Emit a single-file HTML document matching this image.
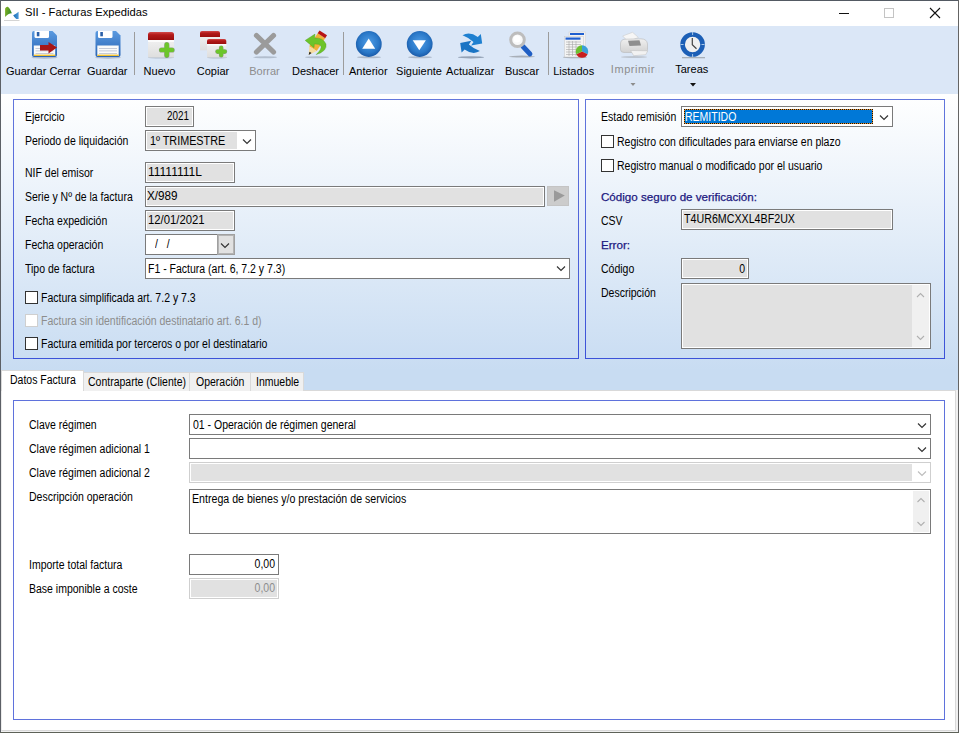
<!DOCTYPE html>
<html><head><meta charset="utf-8">
<style>
*{box-sizing:border-box;margin:0;padding:0}
html,body{width:959px;height:733px;overflow:hidden;background:#fff}
body{position:relative;font-family:"Liberation Sans",sans-serif;color:#000}
.a{position:absolute}
.t{position:absolute;font-size:12px;line-height:13px;white-space:nowrap;transform:scaleX(0.875);transform-origin:0 0}
.r{text-align:right;transform-origin:100% 0}
.tb{position:absolute;font-size:11px;line-height:13px;white-space:nowrap;text-align:center}
.gb{position:absolute;border:1px solid #5f72dc}
.inp{position:absolute;border:1px solid #7a7a7a;background:#e1e1e1;box-shadow:inset 0 0 0 1px #fff}
.wh{position:absolute;border:1px solid #7a7a7a;background:#fff}
.cb{position:absolute;width:13px;height:13px;border:1px solid #333;background:#fff}
.tab{position:absolute;top:372px;height:19px;background:#f0f0f0;border:1px solid #d9d9d9;border-bottom:none}
</style></head><body>
<!-- window frame -->


<!-- title bar -->
<div class="t" style="left:25px;top:6px;font-size:11.2px;transform:none">SII - Facturas Expedidas</div>

<!-- toolbar -->
<div class="a" style="left:1px;top:26px;width:957px;height:68px;background:#dbe7f7"></div>


<svg class="a" style="left:0;top:0" width="959" height="94">
<defs>
<linearGradient id="gBlue" x1="0" y1="0" x2="0" y2="1"><stop offset="0" stop-color="#5a9ae0"/><stop offset="1" stop-color="#2a64b4"/></linearGradient>
<radialGradient id="gCirc" cx="0.5" cy="0.45" r="0.55"><stop offset="0" stop-color="#4f9de6"/><stop offset="0.7" stop-color="#2a78c8"/><stop offset="1" stop-color="#1a5aa8"/></radialGradient>
<linearGradient id="gRed" x1="0" y1="0" x2="0" y2="1"><stop offset="0" stop-color="#d24a4a"/><stop offset="0.35" stop-color="#b31a1a"/><stop offset="1" stop-color="#9a0e0e"/></linearGradient>
<linearGradient id="gCard" x1="0" y1="0" x2="0" y2="1"><stop offset="0" stop-color="#eeeeee"/><stop offset="1" stop-color="#dedede"/></linearGradient>
<linearGradient id="gGreen" x1="0" y1="0" x2="0" y2="1"><stop offset="0" stop-color="#8ad832"/><stop offset="1" stop-color="#52b41c"/></linearGradient>
</defs>
<!-- separators -->
<rect x="134" y="32" width="1" height="43" fill="#9c9c9c"/>
<rect x="343" y="32" width="1" height="43" fill="#9c9c9c"/>
<rect x="548" y="32" width="1" height="43" fill="#9c9c9c"/>
<!-- app icon -->
<linearGradient id="gLeaf" x1="0" y1="0" x2="1" y2="0.3"><stop offset="0" stop-color="#86b41e"/><stop offset="1" stop-color="#338a2e"/></linearGradient>
<linearGradient id="gTri" x1="0" y1="0" x2="1" y2="0"><stop offset="0" stop-color="#1a6cb4"/><stop offset="1" stop-color="#4a98d8"/></linearGradient>
<path d="M5.1 17 L5.1 8.6 Q6 6.6 7.7 6.8 Q9.6 7.4 11.9 13.3 Q8 13.5 5.1 17 Z" fill="url(#gLeaf)"/>
<path d="M13.2 15.3 Q16 14 18.6 11.8 L18.6 19.1 L16.3 18.9 Q14.5 17.8 13.2 15.3 Z" fill="url(#gTri)"/>
<rect x="4" y="20" width="15.5" height="0.9" fill="#d0d0d0"/>
<!-- window buttons -->
<rect x="839" y="13" width="10" height="1" fill="#111"/>
<rect x="884.5" y="8.5" width="9" height="9" fill="none" stroke="#c4c4c4"/>
<path d="M930 8 L940 18 M940 8 L930 18" stroke="#111" stroke-width="1.1"/>

<!-- floppy 1 -->
<g id="flop">
<ellipse cx="44.5" cy="57.5" rx="13" ry="1.2" fill="#8a96a6" opacity="0.55"/>
<path d="M32 33 Q32 31 34 31 L52.5 31 L57 35.5 L57 55 Q57 57 55 57 L34 57 Q32 57 32 55 Z" fill="url(#gBlue)"/>
<path d="M34.5 31 L49 31 L49 36.5 Q49 38 47.5 38 L36 38 Q34.5 38 34.5 36.5 Z" fill="#fff"/>
<rect x="36.8" y="32" width="2.6" height="4.3" fill="#2a5fa8"/>
<rect x="33.8" y="45.5" width="21.4" height="10.5" fill="#fafafa"/>
<rect x="33.8" y="54.6" width="21.4" height="1.4" fill="#f0c030"/>
<rect x="35.5" y="48" width="18" height="0.8" fill="#b8c0d0"/>
<rect x="35.5" y="50.5" width="18" height="0.8" fill="#b8c0d0"/>
<rect x="35.5" y="53" width="18" height="0.8" fill="#b8c0d0"/>
</g>
<polygon points="40,45 48.5,45 48.5,42 57,47.6 48.5,53.4 48.5,50.6 40,50.6" fill="#a81616"/>
<use href="#flop" x="63.5"/>

<!-- nuevo -->
<ellipse cx="161" cy="57.5" rx="13" ry="1" fill="#8a96a6" opacity="0.5"/>
<rect x="148" y="42" width="26" height="15.5" rx="1" fill="url(#gCard)"/>
<rect x="148" y="40" width="26" height="2" fill="#fbfbfb"/>
<path d="M148 40 L148 34.5 Q148 32 150.5 32 L171.5 32 Q174 32 174 34.5 L174 40 Z" fill="url(#gRed)"/>
<path d="M166.8 44.7 V55.3 M161.5 50 H172.10000000000002" stroke="#3f6e22" stroke-width="5.2" stroke-linecap="round" opacity="0.55"/><path d="M166.8 44.7 V55.3 M161.5 50 H172.10000000000002" stroke="#6cc62a" stroke-width="4.2" stroke-linecap="round"/>

<!-- copiar -->
<rect x="200" y="37" width="20" height="13.3" fill="url(#gCard)"/>
<path d="M200 37 L200 33 Q200 31 202 31 L218 31 Q220 31 220 33 L220 37 Z" fill="url(#gRed)"/>
<ellipse cx="217" cy="57.5" rx="10" ry="1" fill="#8a96a6" opacity="0.5"/>
<rect x="207" y="44.5" width="19.3" height="13" fill="url(#gCard)"/>
<rect x="207" y="44" width="19.3" height="1.5" fill="#fbfbfb"/>
<path d="M207 44 L207 41 Q207 39 209 39 L224.3 39 Q226.3 39 226.3 41 L226.3 44 Z" fill="url(#gRed)"/>
<path d="M221.2 47.9 V55.300000000000004 M217.5 51.6 H224.89999999999998" stroke="#3f6e22" stroke-width="4.6" stroke-linecap="round" opacity="0.55"/><path d="M221.2 47.9 V55.300000000000004 M217.5 51.6 H224.89999999999998" stroke="#6cc62a" stroke-width="3.6" stroke-linecap="round"/>

<!-- borrar -->
<ellipse cx="265" cy="57.3" rx="12" ry="1" fill="#8a96a6" opacity="0.5"/>
<path d="M256.5 35.5 L273.5 52 M273.5 35.5 L256.5 52" stroke="#9b9b9b" stroke-width="5.2" stroke-linecap="round"/>

<!-- deshacer -->
<ellipse cx="317" cy="57.3" rx="12" ry="1" fill="#8a96a6" opacity="0.5"/>
<polygon points="325.18,38.21 317.66,33.27 309.20,46.14 316.73,51.08" fill="#f0b238"/>
<polygon points="316.73,51.08 309.20,46.14 308.70,55.10" fill="#f6dca0"/>
<polygon points="311.51,53.04 309.48,51.70 308.70,55.10" fill="#1a1a1a"/>
<polygon points="327.05,35.37 319.53,30.42 317.66,33.27 325.18,38.21" fill="#b81414"/>
<path d="M305.2 40.4 L315 34.1 L314.6 38 Q323 37.5 326 44 Q327.5 51 316.2 54.6 Q322 49 321 46 Q319.5 43.5 314.3 44 L314 47.7 Z" fill="#6cc42a" stroke="#4e9a1e" stroke-width="0.4"/>
<!-- anterior / siguiente -->
<ellipse cx="369" cy="57.3" rx="12" ry="1" fill="#8a96a6" opacity="0.55"/>
<circle cx="368.8" cy="44" r="12.9" fill="url(#gCirc)"/>
<polygon points="362.2,48.8 375.2,48.8 368.7,38.6" fill="#fff"/>
<ellipse cx="420" cy="57.3" rx="12" ry="1" fill="#8a96a6" opacity="0.55"/>
<circle cx="419.7" cy="44" r="12.9" fill="url(#gCirc)"/>
<polygon points="412.7,40.2 425.9,40.2 419.3,50.2" fill="#fff"/>

<!-- actualizar -->
<ellipse cx="471" cy="57.3" rx="13" ry="1.1" fill="#5a6a80" opacity="0.55"/>
<path d="M462.5 35.3 Q469.5 31 477.8 37 L480.8 33.9 L482.2 43.5 L471.1 45.6 L473.5 42 Q468.5 37.6 462.5 35.3 Z" fill="#1f80d0"/>
<path d="M462.5 35.3 Q469.5 31 477.8 37 L480.8 33.9 L482.2 43.5 L471.1 45.6 L473.5 42 Q468.5 37.6 462.5 35.3 Z" fill="#1a74c4" transform="rotate(180 471.2 43.2)"/>
<!-- buscar -->
<ellipse cx="522" cy="56.6" rx="13" ry="1" fill="#6a6a6a" opacity="0.45"/>
<path d="M523 46.5 L530 54" stroke="#1f5ec4" stroke-width="4.8" stroke-linecap="round"/>
<circle cx="517.5" cy="39.8" r="6.8" fill="#f8f8f8" stroke="#bdbdbd" stroke-width="3"/>
<circle cx="517" cy="39" r="3.5" fill="#fff"/>
<!-- listados -->
<ellipse cx="575" cy="57.3" rx="12" ry="1" fill="#6a6a6a" opacity="0.45"/>
<rect x="569" y="32" width="16.5" height="21" fill="#f2f2f2" stroke="#d0d0d0" stroke-width="0.5"/>
<rect x="570" y="33" width="14" height="2" fill="#1f5fd0"/>
<rect x="564.5" y="36.5" width="19" height="20.5" fill="#f4f4f4" stroke="#c8c8c8" stroke-width="0.5"/>
<rect x="565.5" y="37.5" width="15" height="2.2" fill="#1f5fd0"/>
<path d="M566 42h15M566 44.5h15M566 47h15M566 49.5h15M566 52h15M566 54.5h15M569 41v15M572.5 41v15M576 41v15" stroke="#a8a8a8" stroke-width="0.6"/>
<path d="M582 51.5 L582 45.3 A6.2 6.2 0 0 1 587.6 54.2 Z" fill="#3aa0d8"/>
<path d="M582 51.5 L587.6 54.2 A6.2 6.2 0 0 1 576.4 54.2 Z" fill="#c81e1e"/>
<path d="M582 51.5 L576.4 54.2 A6.2 6.2 0 0 1 582 45.3 Z" fill="#6cc030"/>

<!-- imprimir -->
<linearGradient id="gPrn" x1="0" y1="0" x2="0" y2="1"><stop offset="0" stop-color="#f0f0f0"/><stop offset="1" stop-color="#d2d2d2"/></linearGradient>
<ellipse cx="634" cy="57" rx="13" ry="1" fill="#8a8a8a" opacity="0.35"/>
<path d="M622.7 36 L632.6 32.3 L638.4 37.5 L628 41.6 Z" fill="#f6f6f6" stroke="#c4c4c4" stroke-width="0.5"/>
<path d="M620.5 44 Q620.5 39.5 625 39.2 L641 38.8 Q647 39 647.5 44 L647.5 49.5 Q647.5 52.5 644 52.5 L624 52.5 Q620.5 52.5 620.5 49.5 Z" fill="url(#gPrn)" stroke="#b8b8b8" stroke-width="0.6"/>
<path d="M628 40.8 L639.5 40.3 L641 45.5 L629.5 46 Z" fill="#8e8e8e"/>
<path d="M630.6 50.5 L647.8 50.8 L645.7 54.7 L633.7 55.7 Z" fill="#f2f2f2" stroke="#bdbdbd" stroke-width="0.5"/>
<!-- tareas -->
<rect x="682" y="57" width="23" height="1.3" fill="#a8b0b8"/>
<circle cx="692.6" cy="44.5" r="10" fill="#f0f0f0" stroke="#1c5fb6" stroke-width="4.6"/>
<path d="M692.6 32 v3 M692.6 54 v3 M680.5 44.5 h3 M701.5 44.5 h3" stroke="#a8c8e8" stroke-width="1"/>
<path d="M692.3 38 L692.3 44.8 L696.5 48.8" stroke="#444" stroke-width="1.2" fill="none"/>
<!-- dropdown arrows -->
<polygon points="630.5,83 635.5,83 633,86" fill="#8d8d8d"/>
<polygon points="690,83 696,83 693,86.5" fill="#111"/>
</svg>

<!-- toolbar labels -->
<div class="tb" style="left:-6.70px;width:100px;top:65px;color:#000">Guardar Cerrar</div>
<div class="tb" style="left:57.25px;width:100px;top:65px;color:#000">Guardar</div>
<div class="tb" style="left:109.50px;width:100px;top:65px;color:#000">Nuevo</div>
<div class="tb" style="left:163.00px;width:100px;top:65px;color:#000">Copiar</div>
<div class="tb" style="left:214.50px;width:100px;top:65px;color:#8d8d8d">Borrar</div>
<div class="tb" style="left:265.50px;width:100px;top:65px;color:#000">Deshacer</div>
<div class="tb" style="left:318.30px;width:100px;top:65px;color:#000">Anterior</div>
<div class="tb" style="left:369.00px;width:100px;top:65px;color:#000">Siguiente</div>
<div class="tb" style="left:420.25px;width:100px;top:65px;color:#000">Actualizar</div>
<div class="tb" style="left:472.00px;width:100px;top:65px;color:#000">Buscar</div>
<div class="tb" style="left:523.75px;width:100px;top:65px;color:#000">Listados</div>
<div class="tb" style="left:582.90px;width:100px;top:63px;color:#8d8d8d;letter-spacing:0.55px">Imprimir</div>
<div class="tb" style="left:641.75px;width:100px;top:63px;color:#000">Tareas</div>

<!-- form gradient panel -->
<div class="a" style="left:1px;top:94px;width:957px;height:296px;background:linear-gradient(#fff 0px,#c8dcf2 276px,#c8dcf2 296px)"></div>

<!-- group boxes -->
<div class="gb" style="left:13px;top:99px;width:566px;height:260px;border-image:linear-gradient(#6276dc,#3c52d8) 1"></div>
<div class="gb" style="left:585px;top:99px;width:360px;height:260px;border-image:linear-gradient(#6276dc,#3c52d8) 1"></div>


<!-- group 1 content -->
<div class="t" style="left:25px;top:111px">Ejercicio</div>
<div class="inp" style="left:145px;top:106px;width:49px;height:21px"></div>
<div class="t" style="left:150px;top:110px;width:39px;text-align:right;transform-origin:100% 0;transform:scaleX(0.82)">2021</div>

<div class="t" style="left:25px;top:135px">Periodo de liquidación</div>
<div class="wh" style="left:145px;top:130px;width:111px;height:21px"></div>
<div class="a" style="left:147px;top:132px;width:90px;height:17px;background:#e1e1e1"></div>
<div class="t" style="left:149.5px;top:135px;transform:scaleX(0.9)">1º TRIMESTRE</div>

<div class="t" style="left:25px;top:167px">NIF del emisor</div>
<div class="inp" style="left:145px;top:162px;width:90px;height:21px"></div>
<div class="t" style="left:148px;top:166px;transform:none">11111111L</div>

<div class="t" style="left:25px;top:191px">Serie y Nº de la factura</div>
<div class="inp" style="left:145px;top:186px;width:400px;height:21px"></div>
<div class="t" style="left:147px;top:190px;transform:scaleX(0.975)">X/989</div>
<div class="a" style="left:547px;top:186px;width:22px;height:20px;background:#cccccc;border:1px solid #c4c4c4"></div>

<div class="t" style="left:25px;top:215px">Fecha expedición</div>
<div class="inp" style="left:145px;top:210px;width:90px;height:21px"></div>
<div class="t" style="left:148px;top:214px;transform:scaleX(0.943)">12/01/2021</div>

<div class="t" style="left:25px;top:239px">Fecha operación</div>
<div class="wh" style="left:145px;top:234px;width:90px;height:21px"></div>
<div class="a" style="left:217px;top:234px;width:18px;height:21px;background:#e1e1e1;border:1px solid #a0a0a0;box-shadow:inset 0 0 0 1px #b4b4b4"></div>
<div class="t" style="left:155px;top:238px">/&nbsp;&nbsp;&nbsp;/</div>

<div class="t" style="left:25px;top:263px">Tipo de factura</div>
<div class="wh" style="left:145px;top:258px;width:425px;height:21px"></div>
<div class="t" style="left:148px;top:263px">F1 - Factura (art. 6, 7.2 y 7.3)</div>

<div class="cb" style="left:25px;top:291px"></div>
<div class="t" style="left:41px;top:292px">Factura simplificada art. 7.2 y 7.3</div>
<div class="cb" style="left:25px;top:314px;border-color:#cfcfcf"></div>
<div class="t" style="left:41px;top:315px;color:#8d8d8d">Factura sin identificación destinatario art. 6.1 d)</div>
<div class="cb" style="left:25px;top:337px"></div>
<div class="t" style="left:41px;top:338px">Factura emitida por terceros o por el destinatario</div>

<svg class="a" style="left:242px;top:138px" width="11" height="7"><path d="M1 1.5 L5 5.5 L9 1.5" stroke="#333" fill="none" stroke-width="1.15"/></svg><svg class="a" style="left:220px;top:242px" width="11" height="7"><path d="M1 1.5 L5 5.5 L9 1.5" stroke="#333" fill="none" stroke-width="1.15"/></svg>
<svg class="a" style="left:547px;top:186px" width="22" height="20"><path d="M7 4.2 L17.8 9.4 L7 15.8 Z" fill="#9a9a9a"/></svg>
<svg class="a" style="left:556px;top:265px" width="11" height="7"><path d="M1 1.5 L5 5.5 L9 1.5" stroke="#333" fill="none" stroke-width="1.15"/></svg>
<!-- group 2 content -->
<div class="t" style="left:601px;top:111px">Estado remisión</div>
<div class="wh" style="left:681px;top:106px;width:212px;height:21px"></div>
<div class="a" style="left:684px;top:109px;width:189px;height:15px;background:#0078d7;border:1px solid #e8902a;outline:1px dotted #111;outline-offset:-1px"></div>
<div class="t" style="left:685px;top:111px;color:#fff">REMITIDO</div>
<svg class="a" style="left:879px;top:114px" width="11" height="7"><path d="M1 1.5 L5 5.5 L9 1.5" stroke="#333" fill="none" stroke-width="1.15"/></svg>
<div class="cb" style="left:601px;top:135px"></div>
<div class="t" style="left:617px;top:136px">Registro con dificultades para enviarse en plazo</div>
<div class="cb" style="left:601px;top:159px"></div>
<div class="t" style="left:617px;top:160px">Registro manual o modificado por el usuario</div>

<div class="t" style="left:601px;top:190px;color:#1c1880;font-size:11.6px;-webkit-text-stroke:0.25px #1c1880;transform:none">Código seguro de verificación:</div>
<div class="t" style="left:601px;top:215px">CSV</div>
<div class="inp" style="left:681px;top:209px;width:212px;height:21px"></div>
<div class="t" style="left:684px;top:213px;transform:scaleX(0.89)">T4UR6MCXXL4BF2UX</div>
<div class="t" style="left:601px;top:238px;color:#1c1880;font-size:11.6px;-webkit-text-stroke:0.25px #1c1880;transform:none">Error:</div>
<div class="t" style="left:601px;top:263px">Código</div>
<div class="inp" style="left:681px;top:258px;width:68px;height:21px"></div>
<div class="t" style="left:690px;top:262px;width:55px;text-align:right;transform-origin:100% 0;margin-top:1px">0</div>
<div class="t" style="left:601px;top:287px">Descripción</div>
<div class="inp" style="left:681px;top:283px;width:250px;height:66px"></div>
<div class="a" style="left:912px;top:285px;width:17px;height:62px;background:#f0f0f0"></div>
<svg class="a" style="left:912px;top:285px" width="17" height="62"><path d="M5 12 L8.5 8.5 L12 12" stroke="#b0b0b0" fill="none" stroke-width="1.1"/><path d="M5 51 L8.5 54.5 L12 51" stroke="#b0b0b0" fill="none" stroke-width="1.1"/></svg>

<!-- tab page -->
<div class="a" style="left:1px;top:390px;width:955px;height:341px;background:#fff;border:1px solid #d9d9d9;border-left-color:#ebebeb"></div>
<div class="a" style="left:1px;top:370px;width:83px;height:21px;background:#fff;border:1px solid #d9d9d9;border-bottom:none"></div>
<div class="tab" style="left:83px;width:107px"></div>
<div class="tab" style="left:189px;width:62px"></div>
<div class="tab" style="left:250px;width:54px"></div>
<div class="gb" style="left:13px;top:400px;width:932px;height:320px"></div>


<!-- tab labels -->
<div class="t" style="left:9.5px;top:374px">Datos Factura</div>
<div class="t" style="left:88px;top:376px">Contraparte (Cliente)</div>
<div class="t" style="left:196px;top:376px">Operación</div>
<div class="t" style="left:256px;top:376px">Inmueble</div>

<!-- tab page content -->
<div class="t" style="left:29px;top:419px">Clave régimen</div>
<div class="wh" style="left:189px;top:414px;width:742px;height:21px"></div>
<div class="t" style="left:193px;top:419px">01 - Operación de régimen general</div>
<svg class="a" style="left:917px;top:422px" width="11" height="7"><path d="M1 1.5 L5 5.5 L9 1.5" stroke="#333" fill="none" stroke-width="1.15"/></svg>
<div class="t" style="left:29px;top:443px">Clave régimen adicional 1</div>
<div class="wh" style="left:189px;top:438px;width:742px;height:21px"></div>
<svg class="a" style="left:917px;top:446px" width="11" height="7"><path d="M1 1.5 L5 5.5 L9 1.5" stroke="#333" fill="none" stroke-width="1.15"/></svg>
<div class="t" style="left:29px;top:467px">Clave régimen adicional 2</div>
<div class="a" style="left:189px;top:462px;width:742px;height:21px;border:1px solid #cfcfcf;background:#e1e1e1;box-shadow:inset 0 0 0 1px #fff"></div>
<div class="a" style="left:912px;top:463px;width:18px;height:19px;background:#fff"></div>
<svg class="a" style="left:917px;top:470px" width="11" height="7"><path d="M1 1.5 L5 5.5 L9 1.5" stroke="#bdbdbd" fill="none" stroke-width="1.15"/></svg>
<div class="t" style="left:29px;top:491px">Descripción operación</div>
<div class="wh" style="left:189px;top:489px;width:742px;height:45px"></div>
<div class="a" style="left:913px;top:491px;width:16px;height:41px;background:#f0f0f0"></div>
<svg class="a" style="left:913px;top:491px" width="16" height="42"><path d="M4.5 11 L8 7.5 L11.5 11" stroke="#b0b0b0" fill="none" stroke-width="1.1"/><path d="M4.5 31 L8 34.5 L11.5 31" stroke="#b0b0b0" fill="none" stroke-width="1.1"/></svg>
<div class="t" style="left:192px;top:493px;transform:scaleX(0.885)">Entrega de bienes y/o prestación de servicios</div>

<div class="t" style="left:29px;top:559px">Importe total factura</div>
<div class="a" style="left:189px;top:554px;width:90px;height:21px;border:1px solid #7a7a7a;background:#fff"></div>
<div class="t" style="left:195px;top:557px;width:80px;text-align:right;transform-origin:100% 0;margin-top:1px">0,00</div>
<div class="t" style="left:29px;top:583px">Base imponible a coste</div>
<div class="a" style="left:189px;top:578px;width:90px;height:21px;border:1px solid #cfcfcf;background:#e1e1e1;box-shadow:inset 0 0 0 1px #fff"></div>
<div class="t" style="left:195px;top:581px;width:80px;text-align:right;transform-origin:100% 0;color:#8d8d8d;margin-top:1px">0,00</div>

<!-- window frame -->
<div class="a" style="left:1px;top:731px;width:957px;height:1px;background:#f0f0f0"></div>
<div class="a" style="left:956px;top:390px;width:2px;height:342px;background:#f0f0f0"></div>
<div class="a" style="left:0;top:0;width:959px;height:1px;background:#535a63"></div>
<div class="a" style="left:0;top:0;width:1px;height:733px;background:#5c6066"></div>
<div class="a" style="left:958px;top:0;width:1px;height:733px;background:#646464"></div>
<div class="a" style="left:0;top:732px;width:959px;height:1px;background:#5e6258"></div>
</body></html>
